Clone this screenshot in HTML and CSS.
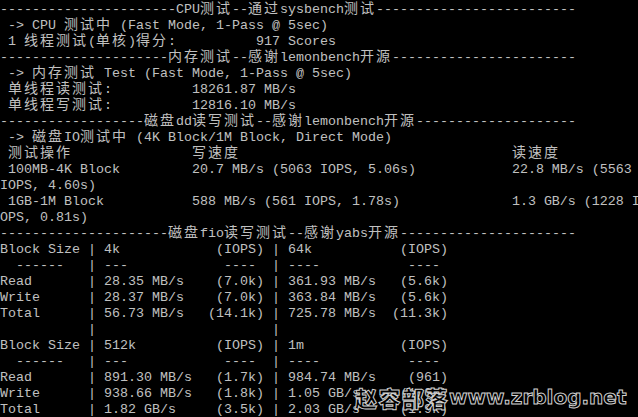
FILE: index.html
```html
<!DOCTYPE html>
<html lang="zh-CN">
<head>
<meta charset="utf-8">
<title>Benchmark</title>
<link rel="stylesheet" href="styles.css">
</head>
<body>
<main class="screen">
<pre class="term">----------------------CPU<span class="cj">测试</span>--<span class="cj">通过</span>sysbench<span class="cj">测试</span>-------------------------
 -> CPU <span class="cj">测试中</span> (Fast Mode, 1-Pass @ 5sec)
 1 <span class="cj">线程测试</span>(<span class="cj">单核</span>)<span class="cj">得分</span>:          917 Scores
---------------------<span class="cj">内存测试</span>--<span class="cj">感谢</span>lemonbench<span class="cj">开源</span>-----------------------
 -> <span class="cj">内存测试</span> Test (Fast Mode, 1-Pass @ 5sec)
 <span class="cj">单线程读测试</span>:          18261.87 MB/s
 <span class="cj">单线程写测试</span>:          12816.10 MB/s
------------------<span class="cj">磁盘</span>dd<span class="cj">读写测试</span>--<span class="cj">感谢</span>lemonbench<span class="cj">开源</span>--------------------
 -> <span class="cj">磁盘</span>IO<span class="cj">测试中</span> (4K Block/1M Block, Direct Mode)
 <span class="cj">测试操作</span>               <span class="cj">写速度</span>                                  <span class="cj">读速度</span>
 100MB-4K Block         20.7 MB/s (5063 IOPS, 5.06s)            22.8 MB/s (5563 
IOPS, 4.60s)
 1GB-1M Block           588 MB/s (561 IOPS, 1.78s)              1.3 GB/s (1228 I
OPS, 0.81s)
---------------------<span class="cj">磁盘</span>fio<span class="cj">读写测试</span>--<span class="cj">感谢</span>yabs<span class="cj">开源</span>----------------------
Block Size | 4k            (IOPS) | 64k           (IOPS)
  ------   | ---            ----  | ----           ----
Read       | 28.35 MB/s    (7.0k) | 361.93 MB/s   (5.6k)
Write      | 28.37 MB/s    (7.0k) | 363.84 MB/s   (5.6k)
Total      | 56.73 MB/s   (14.1k) | 725.78 MB/s  (11.3k)
           |                      |
Block Size | 512k          (IOPS) | 1m            (IOPS)
  ------   | ---            ----  | ----           ----
Read       | 891.30 MB/s   (1.7k) | 984.74 MB/s    (961)
Write      | 938.66 MB/s   (1.8k) | 1.05 GB/s     (1.0k)
Total      | 1.82 GB/s     (3.5k) | 2.03 GB/s     (1.9k)</pre>
<div class="watermark"><span class="wm-cj">赵容部落</span><span class="wm-en">www.zrblog.net</span></div>
</main>
</body>
</html>
```
FILE: styles.css
```css
html, body {
  margin: 0;
  padding: 0;
  background: #000;
}
.screen {
  position: relative;
  width: 638px;
  height: 417px;
  overflow: hidden;
  background: #000;
}
.term {
  margin: 0;
  padding: 2px 0 0 0;
  font-family: "Liberation Mono", monospace;
  font-size: 13.333px;
  line-height: 16px;
  color: #c0c0c0;
  white-space: pre;
}
.cj {
  font-family: "Noto Sans CJK SC", sans-serif;
  font-size: 14px;
  letter-spacing: 2px;
  line-height: 10px;
}
.watermark {
  position: absolute;
  left: 355px;
  top: 386px;
  display: flex;
  align-items: center;
  color: #000;
  -webkit-text-stroke: 1px #d0d0d0;
  white-space: nowrap;
}
.wm-cj {
  font-family: "Noto Sans CJK SC", sans-serif;
  font-weight: 900;
  font-size: 22px;
  letter-spacing: 1.5px;
  line-height: 22px;
}
.wm-en {
  font-family: "DejaVu Sans", sans-serif;
  font-weight: bold;
  font-size: 20px;
  letter-spacing: 0;
  line-height: 22px;
}
```
